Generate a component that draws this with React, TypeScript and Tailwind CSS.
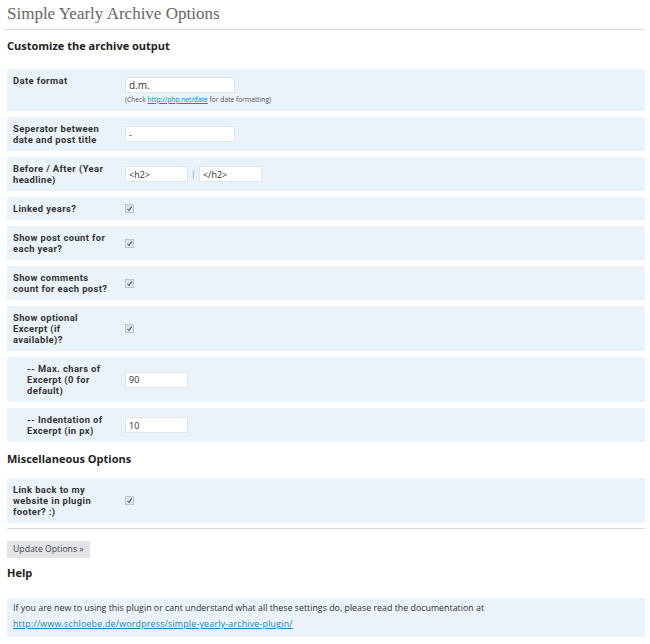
import type { ReactNode } from "react"

const Check = () => (
  <span className="flex h-[9px] w-[9px] items-center justify-center border border-[#c4c4c4] bg-[#e4e4e4]">
    <svg width="7" height="7" viewBox="0 0 7 7">
      <path d="M1.5 3.8 L3 5.4 L5.8 1.4" stroke="#3e5fae" strokeWidth="1.1" fill="none" />
    </svg>
  </span>
)

const Field = ({ value, w = "w-[110px]", big }: { value: string; w?: string; big?: boolean }) => (
  <input
    readOnly
    defaultValue={value}
    className={`${w} h-[16px] border border-[#dfe6ec] bg-white px-[3px] ${big ? "text-[10px]" : "text-[9px]"} text-[#333] outline-none`}
  />
)

const labelCls =
  "w-[112px] shrink-0 font-['Roboto',sans-serif] text-[9.4px] font-bold leading-[11px] tracking-[0.4px] text-[#333]"

const Row = ({ label, indent, children }: { label: ReactNode; indent?: boolean; children: ReactNode }) => (
  <div className="flex items-center bg-[#eaf2fa] py-[6px] pl-[6px]">
    <div className={`${labelCls} ${indent ? "pl-[14px]" : ""}`}>{label}</div>
    <div className="flex items-center">{children}</div>
  </div>
)

const Heading = ({ children, className }: { children: ReactNode; className: string }) => (
  <h3 className={`text-[11px] font-bold leading-[14px] text-[#222] ${className}`}>{children}</h3>
)

export default function App() {
  return (
    <div className="min-h-[644px] w-[650px] bg-white pl-[7px] pr-[5px] font-['Open_Sans',sans-serif]">
      <h2 className="-ml-[3px] h-[30px] border-b border-[#dcdcdc] pl-[3px] pt-[4px] font-['Liberation_Serif',serif] text-[17px] leading-[20px] text-[#666]">
        Simple Yearly Archive Options
      </h2>

      <Heading className="mt-[9px] mb-[16px]">Customize the archive output</Heading>

      <div className="flex flex-col gap-[6px]">
        <div className="flex items-start bg-[#eaf2fa] pb-[7px] pl-[6px] pt-[6px]">
          <div className={labelCls}>Date format</div>
          <div className="mt-[2px] flex flex-col">
            <Field value="d.m." big />
            <p className="mt-[2px] text-[6.7px] leading-[9px] text-[#555]">
              (Check{" "}
              <a className="text-[#2583ad] underline" href="#">
                http://php.net/date
              </a>{" "}
              for date formatting)
            </p>
          </div>
        </div>

        <Row label={<>Seperator between<br />date and post title</>}>
          <Field value="-" />
        </Row>

        <Row label={<>Before / After (Year<br />headline)</>}>
          <Field value="<h2>" w="w-[63px]" />
          <span className="mx-[3px] text-[9px] text-[#999]">|</span>
          <Field value="</h2>" w="w-[63px]" />
        </Row>

        <Row label="Linked years?">
          <Check />
        </Row>

        <Row label={<>Show post count for<br />each year?</>}>
          <Check />
        </Row>

        <Row label={<>Show comments<br />count for each post?</>}>
          <Check />
        </Row>

        <Row label={<>Show optional<br />Excerpt (if<br />available)?</>}>
          <Check />
        </Row>

        <Row indent label={<>-- Max. chars of<br />Excerpt (0 for<br />default)</>}>
          <Field value="90" w="w-[63px]" />
        </Row>

        <Row indent label={<>-- Indentation of<br />Excerpt (in px)</>}>
          <Field value="10" w="w-[63px]" />
        </Row>
      </div>

      <Heading className="mt-[10px] mb-[12px]">Miscellaneous Options</Heading>

      <Row label={<>Link back to my<br />website in plugin<br />footer? :)</>}>
        <Check />
      </Row>

      <div className="mt-[5px] border-t border-[#dcdcdc]" />

      <button className="mt-[12px] h-[17px] bg-[#e4e4e4] px-[6px] text-[8.7px] leading-[17px] text-[#3a4756]">
        Update Options »
      </button>

      <Heading className="mt-[8px]">Help</Heading>

      <div className="mt-[18px] bg-[#eaf2fa] pb-[5px] pl-[6px] pt-[2px] text-[8.85px] leading-[16px] text-[#333]">
        If you are new to using this plugin or cant understand what all these settings do, please read the documentation at
        <br />
        <a className="tracking-[0.2px] text-[#2583ad] underline" href="#">
          http://www.schloebe.de/wordpress/simple-yearly-archive-plugin/
        </a>
      </div>
    </div>
  )
}
